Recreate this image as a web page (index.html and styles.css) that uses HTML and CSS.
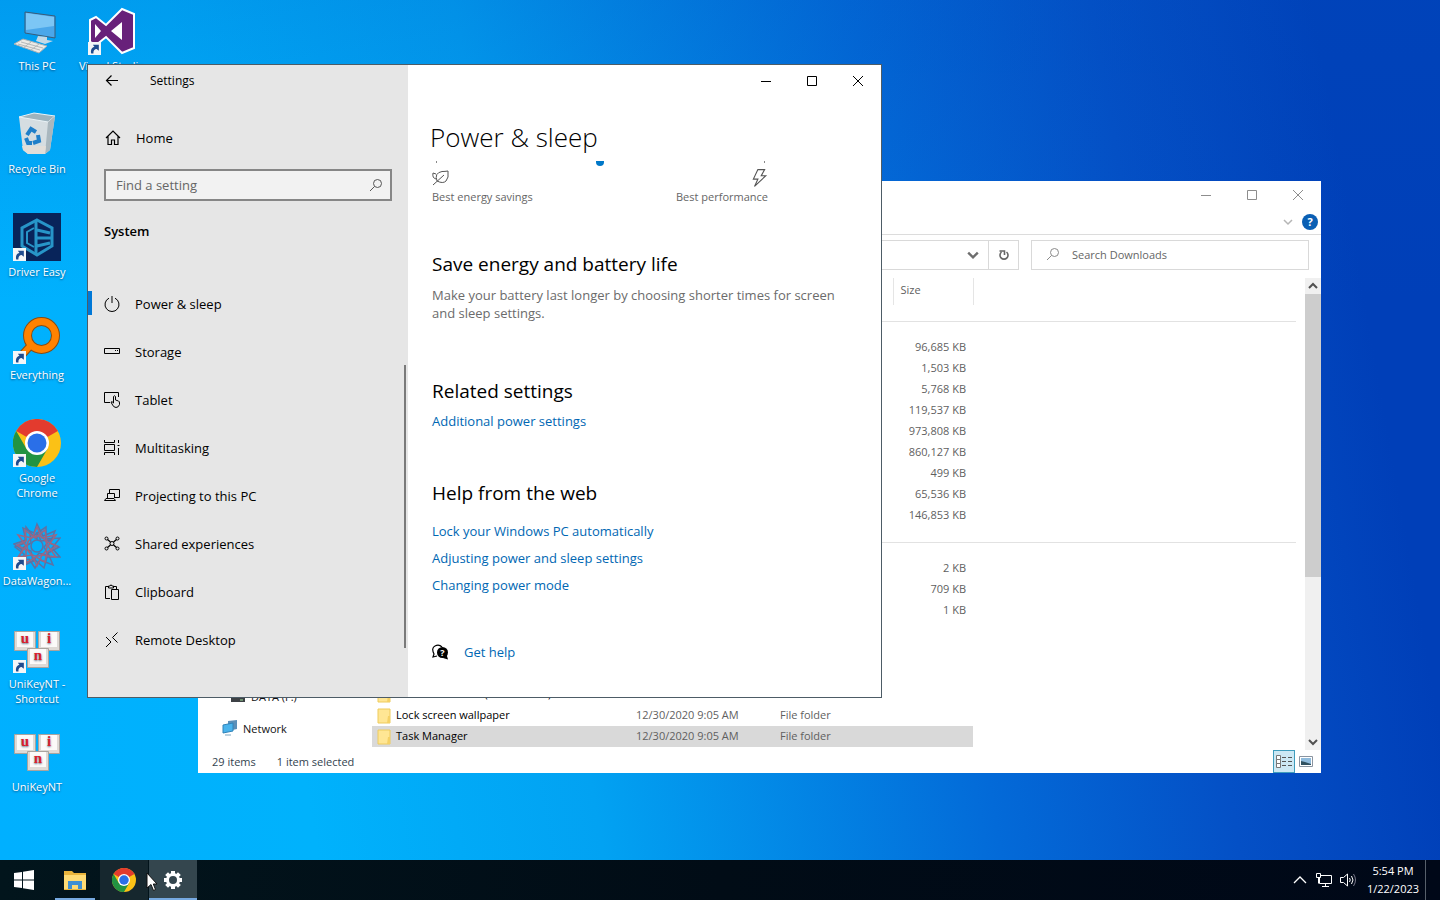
FILE: index.html
```html
<!DOCTYPE html>
<html lang="en">
<head>
    <meta charset="utf-8">
    <title>Desktop</title>
    <link rel="stylesheet" href="styles.css">
</head>
<body>
    <!-- shared shapes -->
    <svg class="defs" aria-hidden="true">
        <symbol id="chrome" viewBox="0 0 48 48">
            <circle cx="24" cy="24" r="24" fill="#fbc116"/>
            <path d="M24 24 L3.2 12 A24 24 0 0 1 44.8 12 Z" fill="#e33b2e"/>
            <path d="M24 12 H44.8 L40 8 H24 Z" fill="#e33b2e"/>
            <path d="M3.2 12 A24 24 0 0 0 24 48 L34.4 30 L24 24 L13.6 30 Z" fill="#229342"/>
            <circle cx="24" cy="24" r="12" fill="#fff"/>
            <circle cx="24" cy="24" r="9.5" fill="#2a6fe8"/>
        </symbol>
        <symbol id="shortcut" viewBox="0 0 12 12">
            <path d="M0 0h12v12H0z" fill="#f4f6f8"/>
            <path d="M3 10.5C2 7 4 4.500 6 4.500L4.500 2.500H10V8L8 6.500C6 6.500 4.800 8 5 10.500z" fill="#1f4b8e"/>
        </symbol>
        <symbol id="keys" viewBox="0 0 48 48">
            <g stroke="#a9a49f">
                <path d="M1.500 6.500h21v19h-21z" fill="#dedad6"/>
                <path d="M25.500 6.500h21v19h-21z" fill="#dedad6"/>
                <path d="M14.500 23.500h21v19h-21z" fill="#dedad6"/>
            </g>
            <path d="M4 7h16v15H4zM28 7h16v15H28zM17 24h16v15H17z" fill="#fbfaf9"/>
        </symbol>
        <symbol id="folder" viewBox="0 0 14 16">
            <path d="M1 1h12v14H1z" fill="#ffe694" stroke="#eecb5c"/>
            <path d="M10 15l1-7h2v7z" fill="#f5d165"/>
        </symbol>
        <symbol id="lens" viewBox="0 0 14 14">
            <circle cx="8.500" cy="5.500" r="4" fill="none" stroke="currentColor"/>
            <path d="M5.500 8.500L1 13" stroke="currentColor"/>
        </symbol>
        <symbol id="min" viewBox="0 0 12 12"><path d="M1 6.500h10" stroke="currentColor"/></symbol>
        <symbol id="max" viewBox="0 0 12 12"><path d="M1.500 1.500h9v9h-9z" fill="none" stroke="currentColor"/></symbol>
        <symbol id="close" viewBox="0 0 12 12"><path d="M1 1l10 10M11 1L1 11" stroke="currentColor"/></symbol>
    </svg>

    <main class="desktop">
        <div class="icons">
            <a class="shortcut" href="#">
                <svg viewBox="0 0 48 48">
                    <path d="M12 5l30 4v22l-30-5z" fill="#4aa7ea" stroke="#3a5c78"/>
                    <path d="M13 6l28 4v9L13 23z" fill="#7cc6f5"/>
                    <path d="M25 29l9 1v3l6 1-8 3-9-3z" fill="#c4d9e6"/>
                    <path d="M1 37l9-5 24 7-8 7z" fill="#eceae6" stroke="#a7b0b5"/>
                    <path d="M5 37l22 6M8 35l22 6M10 41l8-6M18 43l8-6" stroke="#b4b8ba"/>
                </svg>
                <span>This PC</span>
            </a>
            <a class="shortcut" href="#">
                <svg viewBox="0 0 48 48">
                    <path d="M6 7l36-1-5 34-5 4-17 0-5-4z" fill="#d5dde1"/>
                    <path d="M6 7l15-4 21 3-7 6z" fill="#9eb3bd" stroke="#eaf3f7"/>
                    <path d="M35 12l7-6-5 34-5 4z" fill="#a9b7be"/>
                    <path d="M9 36l1 4 5 4h17l1-8z" fill="#e2ded9"/>
                    <g fill="none" stroke="#1f7fc9" stroke-width="4">
                        <path d="M14 25l4-6 5 3"/>
                        <path d="M25 25l1 6-6 2"/>
                        <path d="M13 28l2 5h4"/>
                    </g>
                </svg>
                <span>Recycle Bin</span>
            </a>
            <a class="shortcut" href="#">
                <svg viewBox="0 0 48 48">
                    <path d="M0 0h48v48H0z" fill="#08245a"/>
                    <g fill="none" stroke="#2795c8" stroke-width="3">
                        <path d="M24 7l15 8v18l-15 9-15-9V15z"/>
                        <path d="M23 8v33M24 17l13 3M24 25h14M24 33l13-3"/>
                        <path d="M21 15l-7 4v11l7 4" stroke-width="2"/>
                    </g>
                    <use href="#shortcut" x="0" y="35" width="13" height="13"/>
                </svg>
                <span>Driver Easy</span>
            </a>
            <a class="shortcut" href="#">
                <svg viewBox="0 0 48 48">
                    <path d="M19 28L8 40" stroke="#8a4b10" stroke-width="8"/>
                    <circle cx="28.500" cy="19.500" r="14" fill="none" stroke="#8a4b10" stroke-width="9"/>
                    <path d="M19 28L8 40" stroke="#ff8200" stroke-width="6"/>
                    <circle cx="28.500" cy="19.500" r="14" fill="none" stroke="#ff8200" stroke-width="7"/>
                    <use href="#shortcut" x="0" y="35" width="13" height="13"/>
                </svg>
                <span>Everything</span>
            </a>
            <a class="shortcut" href="#">
                <svg viewBox="0 0 48 48">
                    <use href="#chrome"/>
                    <use href="#shortcut" x="0" y="35" width="13" height="13"/>
                </svg>
                <span>Google Chrome</span>
            </a>
            <a class="shortcut" href="#">
                <svg viewBox="0 0 48 48">
                    <g fill="none" stroke="#5c72a4" stroke-width="1.500">
                        <path d="M24 2l6 12 12-5-5 12 9 4-11 6 5 12-13-5-5 8-6-9-12 3 5-12-8-6 12-4-3-12 11 5z"/>
                        <path d="M13 5l7 9 13-9 0 12 14-1-8 10 8 9-13 0-3 11-9-8-12 6 1-12-9-7 10-4z"/>
                        <path d="M24 10l4 9 9-1-6 7 5 9-10-3-6 8-2-10-9-3 9-5-1-9 7 5z"/>
                        <circle cx="24" cy="24" r="6"/>
                    </g>
                    <g fill="none" stroke="#9a6684" stroke-width="1.500">
                        <path d="M5 13l14 3 5-11 5 11 14-3-8 11 8 11-14-2-5 11-5-11-14 2 8-11z"/>
                        <path d="M12 8l10 8 10-8 2 12 10 4-10 6-2 10-9-5-10 6v-13l-9-5 9-4z"/>
                        <circle cx="24" cy="24" r="10"/>
                    </g>
                    <use href="#shortcut" x="0" y="35" width="13" height="13"/>
                </svg>
                <span>DataWagon...</span>
            </a>
            <a class="shortcut" href="#">
                <svg viewBox="0 0 48 48">
                    <use href="#keys"/>
                    <g class="keycap"><text x="12" y="18">u</text><text x="36" y="18">i</text><text x="25" y="35">n</text></g>
                    <use href="#shortcut" x="0" y="35" width="13" height="13"/>
                </svg>
                <span>UniKeyNT - Shortcut</span>
            </a>
            <a class="shortcut" href="#">
                <svg viewBox="0 0 48 48">
                    <use href="#keys"/>
                    <g class="keycap"><text x="12" y="18">u</text><text x="36" y="18">i</text><text x="25" y="35">n</text></g>
                </svg>
                <span>UniKeyNT</span>
            </a>
            <a class="shortcut" href="#">
                <svg viewBox="0 0 48 48">
                    <path d="M2 13l6-3 10 8L34 2l12 5v34l-12 5-16-16-10 8-6-3z" fill="#68217a" stroke="#fff" stroke-width="2"/>
                    <path d="M7 17l6 7-6 7zM34 15v18L23 24z" fill="#fff"/>
                    <use href="#shortcut" x="0" y="35" width="13" height="13"/>
                </svg>
                <span>Visual Studio</span>
            </a>
        </div>

        <!-- file explorer, behind -->
        <section class="window explorer">
            <header class="titlebar inactive">
                <button aria-label="Minimize"><svg><use href="#min"/></svg></button>
                <button aria-label="Maximize"><svg><use href="#max"/></svg></button>
                <button aria-label="Close"><svg><use href="#close"/></svg></button>
            </header>
            <div class="ribbon">
                <svg class="caret" viewBox="0 0 10 10"><path d="M1 3l4 4 4-4" fill="none" stroke="#b5b5b5" stroke-width="1.500"/></svg>
                <button class="help" aria-label="Help">?</button>
            </div>
            <div class="address-row">
                <div class="address">
                    <button class="drop" aria-label="Previous locations"><svg viewBox="0 0 10 10"><path d="M1 3l4 4 4-4" fill="none" stroke="#6e6e6e" stroke-width="2"/></svg></button>
                    <button class="refresh" aria-label="Refresh"><svg viewBox="0 0 12 12"><path d="M8.500 3A4 4 0 1 1 3.500 3M1.500 2h5v4" fill="none" stroke="#666" stroke-width="1.600"/></svg></button>
                </div>
                <label class="search-files">
                    <svg><use href="#lens"/></svg>
                    <input type="text" placeholder="Search Downloads" aria-label="Search Downloads">
                </label>
            </div>
            <div class="explorer-body">
                <nav class="tree">
                    <a class="drive" href="#">
                        <svg viewBox="0 0 16 16"><path d="M2 8h12l1 2v4H1v-4z" fill="#3d4145"/><path d="M10 12h3" stroke="#9fe0a0"/></svg>
                        DATA (F:)
                    </a>
                    <a href="#">
                        <svg viewBox="0 0 16 16"><path d="M6 1l9-1v9l-9 2z" fill="#5b8fb8"/><path d="M1 5l10-2v8L1 13z" fill="#49b3ec" stroke="#3183b8"/><path d="M3 15h6" stroke="#7fa6bf"/></svg>
                        Network
                    </a>
                </nav>
                <div class="files">
                    <table>
                        <colgroup><col class="c-name"><col class="c-date"><col class="c-type"><col class="c-size"><col></colgroup>
                        <thead><tr><th></th><th></th><th></th><th class="size-head">Size</th><th></th></tr></thead>
                        <tbody>
                            <tr class="group"><td colspan="5"><hr></td></tr>
                            <tr><td></td><td></td><td></td><td>96,685 KB</td></tr>
                            <tr><td></td><td></td><td></td><td>1,503 KB</td></tr>
                            <tr><td></td><td></td><td></td><td>5,768 KB</td></tr>
                            <tr><td></td><td></td><td></td><td>119,537 KB</td></tr>
                            <tr><td></td><td></td><td></td><td>973,808 KB</td></tr>
                            <tr><td></td><td></td><td></td><td>860,127 KB</td></tr>
                            <tr><td></td><td></td><td></td><td>499 KB</td></tr>
                            <tr><td></td><td></td><td></td><td>65,536 KB</td></tr>
                            <tr><td></td><td></td><td></td><td>146,853 KB</td></tr>
                        </tbody>
                        <tbody>
                            <tr class="group"><td colspan="5"><hr></td></tr>
                            <tr><td></td><td></td><td></td><td>2 KB</td></tr>
                            <tr><td></td><td></td><td></td><td>709 KB</td></tr>
                            <tr><td></td><td></td><td></td><td>1 KB</td></tr>
                            <tr><td></td><td></td><td></td><td></td></tr>
                            <tr><td></td><td></td><td></td><td></td></tr>
                            <tr><td></td><td></td><td></td><td></td></tr>
                            <tr><td><svg><use href="#folder"/></svg>AutoLock Win 10 (Lock screen)</td><td>12/30/2020 9:05 AM</td><td>File folder</td><td></td></tr>
                            <tr><td><svg><use href="#folder"/></svg>Lock screen wallpaper</td><td>12/30/2020 9:05 AM</td><td>File folder</td><td></td></tr>
                            <tr class="selected"><td><svg><use href="#folder"/></svg>Task Manager</td><td>12/30/2020 9:05 AM</td><td>File folder</td><td></td></tr>
                            <tr><td><svg><use href="#folder"/></svg></td><td></td><td></td><td></td></tr>
                        </tbody>
                    </table>
                </div>
                <div class="scrollbar">
                    <svg viewBox="0 0 10 10"><path d="M1 7l4-4 4 4" fill="none" stroke="#505050" stroke-width="2"/></svg>
                    <div class="thumb"></div>
                    <svg viewBox="0 0 10 10"><path d="M1 3l4 4 4-4" fill="none" stroke="#505050" stroke-width="2"/></svg>
                </div>
            </div>
            <footer class="status">
                <span>29 items</span>
                <span>1 item selected</span>
                <button class="view on" aria-label="Details view">
                    <svg viewBox="0 0 16 14"><g fill="#fff" stroke="#777"><path d="M.5.5h4v4h-4zM.5 4.500h4v4h-4zM.5 8.500h4v4h-4z"/></g><path d="M6 2.500h4M12 2.500h4M6 6.500h4M12 6.500h4M6 10.500h4M12 10.500h4" stroke="#555"/></svg>
                </button>
                <button class="view" aria-label="Large icons view">
                    <svg viewBox="0 0 16 14"><path d="M1.500 1.500h13v10h-13z" fill="#fff" stroke="#8a94a0"/><path d="M3 3h10v7H3z" fill="#8fbbdc"/><path d="M3 10V6l4 1 6 2v1z" fill="#30505f"/></svg>
                </button>
            </footer>
        </section>

        <!-- settings, in front -->
        <section class="window settings">
            <nav class="side">
                <div class="side-title">
                    <button aria-label="Back"><svg viewBox="0 0 16 16"><path d="M14 7.500H2.500M7.500 2.500l-5 5 5 5" fill="none" stroke="#000" stroke-width="1.200"/></svg></button>
                    <span>Settings</span>
                </div>
                <a class="home" href="#">
                    <svg viewBox="0 0 16 16"><path d="M1 8l7-7 7 7M3 6.500v8h3.500V10h3v4.500H13v-8" fill="none" stroke="#000" stroke-width="1.200"/></svg>
                    Home
                </a>
                <label class="find">
                    <input type="text" placeholder="Find a setting" aria-label="Find a setting">
                    <svg><use href="#lens"/></svg>
                </label>
                <h2>System</h2>
                <div class="menu">
                    <ul>
                        <li class="current"><a href="#"><svg viewBox="0 0 16 16"><path d="M5 2.200a7 7 0 1 0 6 0M8 0v7"/></svg>Power &amp; sleep</a></li>
                        <li><a href="#"><svg viewBox="0 0 16 16"><path d="M.5 4.500h15v5H.5zM11 6.500h1M13 6.500h1"/></svg>Storage</a></li>
                        <li><a href="#"><svg viewBox="0 0 16 16"><path d="M6 10.500H.5v-10h14V5M9.500 11V4.500q1-1.500 2 0V8l3 1q1 .5 1 2v1.500q-1 3-3.500 3T8 12l-1-2q1-1 2.500 1"/></svg>Tablet</a></li>
                        <li><a href="#"><svg viewBox="0 0 16 16"><path d="M.5 0v2.500h10V0M.5 4.500h10v6H.5zM.5 15v-2.500h10V15M14.500 0v3M14.500 8v7M13.500 5.500h2"/></svg>Multitasking</a></li>
                        <li><a href="#"><svg viewBox="0 0 16 16"><path d="M5.500 5V1.500h10v8H11M3.500 10V5.500h7V10M.5 12.500h11L10 10.500H2z"/></svg>Projecting to this PC</a></li>
                        <li><a href="#"><svg viewBox="0 0 16 16"><circle cx="2.500" cy="2.500" r="1.500"/><circle cx="13.500" cy="2.500" r="1.500"/><circle cx="2.500" cy="12.500" r="1.500"/><circle cx="13.500" cy="12.500" r="1.500"/><circle cx="8" cy="7.500" r="2"/><path d="M3.500 3.500l3 2.500M12.500 3.500l-3 2.500M3.500 11.500l3-2.500M12.500 11.500l-3-2.500" stroke-width="1.300"/></svg>Shared experiences</a></li>
                        <li><a href="#"><svg viewBox="0 0 16 16"><path d="M6 14.500H1.500v-12H4M10 2.500h2.500V5M4.500 4V2H6q1-2.500 2 0h1.500v2zM7.500 5.500h7v10h-7z"/></svg>Clipboard</a></li>
                        <li><a href="#"><svg viewBox="0 0 16 16"><path d="M2 5l5 5-5 5M13.500.5L8.500 5.500l5 5"/></svg>Remote Desktop</a></li>
                    </ul>
                    <div class="menu-thumb"></div>
                </div>
            </nav>
            <div class="content">
                <header class="titlebar">
                    <button aria-label="Minimize"><svg><use href="#min"/></svg></button>
                    <button aria-label="Maximize"><svg><use href="#max"/></svg></button>
                    <button aria-label="Close"><svg><use href="#close"/></svg></button>
                </header>
                <h1>Power &amp; sleep</h1>
                <div class="page">
                    <div class="power-mode">
                        <div class="slider"><input type="range" min="0" max="2" value="1" aria-label="Power mode"></div>
                        <div class="ends">
                            <div>
                                <svg viewBox="0 0 18 16"><path d="M5 11Q2 3 10 1.500q3 0 6-.5Q17 8 14 11T5 11M1 15L12 5M4 9Q0 8 1 3l3 1" fill="none" stroke="#555"/></svg>
                                <span>Best energy savings</span>
                            </div>
                            <div>
                                <svg viewBox="0 0 16 16"><path d="M7 .5h6L10 6h4L4 15.500 7 9H3z" fill="none" stroke="#555"/></svg>
                                <span>Best performance</span>
                            </div>
                        </div>
                    </div>
                    <h3>Save energy and battery life</h3>
                    <p>Make your battery last longer by choosing shorter times for screen and sleep settings.</p>
                    <h3>Related settings</h3>
                    <a class="related" href="#">Additional power settings</a>
                    <h3>Help from the web</h3>
                    <div class="web">
                        <a href="#">Lock your Windows PC automatically</a>
                        <a href="#">Adjusting power and sleep settings</a>
                        <a href="#">Changing power mode</a>
                    </div>
                    <a class="get-help" href="#">
                        <svg viewBox="0 0 16 16"><path d="M10 3Q7 0 3 2T2 10L1 13l4-1" fill="none" stroke="#000" stroke-width="1.200"/><circle cx="10.500" cy="8.500" r="5.500"/><path d="M11 14l5 1.500-1.500-5z"/><text x="10.500" y="12">?</text></svg>
                        Get help
                    </a>
                </div>
            </div>
        </section>
    </main>

    <footer class="taskbar">
        <button class="task" aria-label="Start">
            <svg viewBox="0 0 20 20"><path d="M0 3l8-1v7.500H0zM9 1.800L20 0v9.500H9zM0 10.500h8V18l-8-1zM9 10.500h11V20L9 18.200z" fill="#fff"/></svg>
        </button>
        <button class="task open" aria-label="File Explorer">
            <svg viewBox="0 0 24 24"><path d="M1 3h8l2 2h12v17H1z" fill="#e9b43c"/><path d="M1 7h22v14H1z" fill="#fedb75"/><path d="M5 21v-8h14v8h-4v-4H9v4z" fill="#3f8fd2"/></svg>
        </button>
        <button class="task hover" aria-label="Google Chrome">
            <svg><use href="#chrome"/></svg>
        </button>
        <button class="task active" aria-label="Settings">
            <svg viewBox="0 0 24 24"><g stroke="#fff" stroke-width="4"><path d="M12 3v18M3 12h18M5.600 5.600l12.800 12.800M18.400 5.600L5.600 18.400"/></g><circle cx="12" cy="12" r="5.500" fill="#34464e" stroke="#fff" stroke-width="3"/></svg>
        </button>
        <div class="tray">
            <svg viewBox="0 0 16 16"><path d="M2 11l6-6 6 6" fill="none" stroke="#fff" stroke-width="1.300"/></svg>
            <svg viewBox="0 0 16 16"><path d="M5 3.500h10.500v8H3.500V6M9.500 12v3M6 14.500h7M.5 1.500h4v4h-4zM2.500 5.500v6" fill="none" stroke="#fff"/></svg>
            <svg viewBox="0 0 16 16"><path d="M.5 5.500h3l4-3.500v12l-4-3.500h-3zM9.500 6q1.500 2 0 4M11.500 4q3 4 0 8" fill="none" stroke="#fff"/><path d="M13.500 2q4 6 0 12" fill="none" stroke="#778"/></svg>
            <time datetime="2023-01-22T17:54">5:54 PM<br>1/22/2023</time>
            <button class="show-desktop" aria-label="Show desktop"></button>
        </div>
    </footer>

    <svg class="pointer" viewBox="0 0 12 20"><path d="M1 1v15l4-3.500 2.500 6 2-1L7.300 12H11z" fill="#fff" stroke="#111"/></svg>
</body>
</html>
```

FILE: styles.css
```css
* {
    box-sizing: border-box;
}
body {
    margin: 0;
    height: 100vh;
    display: flex;
    flex-direction: column;
    overflow: hidden;
    font: 11px/15px "Open Sans", "Noto Sans", sans-serif;
    color: #000;
}
a {
    color: inherit;
    text-decoration: none;
}
button {
    padding: 0;
    border: 0;
    background: none;
    font: inherit;
    color: inherit;
    display: flex;
    align-items: center;
    justify-content: center;
}
input {
    border: 0;
    padding: 0;
    background: none;
    font: inherit;
    min-width: 0;
}
.defs {
    position: absolute;
    width: 0;
    height: 0;
}
.keycap {
    font: bold 15px "Liberation Serif", serif;
    fill: #d9202c;
    text-anchor: middle;
}

/* desktop */
.desktop {
    flex: 1;
    position: relative;
    overflow: hidden;
    background:
        linear-gradient(to bottom, rgba(0, 80, 190, .22), rgba(0, 80, 190, 0) 35%),
        linear-gradient(80deg, #00b0ff 0%, #00b2fc 20%, #02a2f2 38%, #036ad8 63%, #0450c6 78%, #003fb8 92%);
}
.icons {
    height: 100%;
    padding-top: 7px;
    display: grid;
    grid-template-rows: repeat(8, 103px);
    grid-auto-flow: column;
    grid-auto-columns: 75px;
}
.shortcut {
    display: flex;
    flex-direction: column;
    align-items: center;
    gap: 3px;
    padding-right: 1px;
    color: #fff;
    text-align: center;
    text-shadow: 0 1px 2px rgba(0, 30, 70, .6);
}
.shortcut span {
    padding: 0 1px;
}
.shortcut svg {
    width: 48px;
    height: 48px;
}

/* windows */
.window {
    position: absolute;
    display: flex;
    background: #fff;
}
.titlebar {
    display: flex;
    justify-content: flex-end;
    height: 32px;
}
.titlebar button {
    width: 46px;
    height: 100%;
}
.titlebar svg {
    width: 12px;
    height: 12px;
}
.titlebar.inactive {
    height: 28px;
    color: #8d8d8d;
}

/* explorer */
.explorer {
    left: 198px;
    right: 119px;
    top: 181px;
    bottom: 87px;
    flex-direction: column;
    color: #5f5f5f;
}
.ribbon {
    height: 26px;
    display: flex;
    align-items: center;
    justify-content: flex-end;
    gap: 9px;
    padding-right: 3px;
    border-bottom: 1px solid #dcdcdc;
}
.ribbon .caret {
    width: 10px;
    height: 10px;
}
.help {
    width: 16px;
    height: 16px;
    border-radius: 50%;
    background: #0a5fb4;
    color: #fff;
    font-weight: bold;
}
.address-row {
    display: flex;
    gap: 12px;
    padding: 5px 12px 8px;
}
.address, .search-files {
    height: 30px;
    border: 1px solid #d9d9d9;
    display: flex;
}
.address {
    flex: 1;
    justify-content: flex-end;
}
.address button {
    width: 30px;
}
.address svg {
    width: 12px;
    height: 12px;
}
.address .refresh {
    border-left: 1px solid #d9d9d9;
}
.search-files {
    width: 278px;
    align-items: center;
    gap: 12px;
    padding: 0 14px 2px;
}
.search-files svg {
    width: 14px;
    height: 14px;
    color: #8a8a8a;
}
.search-files input {
    flex: 1;
}
.search-files input::placeholder {
    color: #666;
}
.explorer-body {
    flex: 1;
    min-height: 0;
    display: flex;
}
.tree {
    width: 174px;
    flex: none;
    padding: 0 0 10px 24px;
    display: flex;
    flex-direction: column;
    justify-content: flex-end;
    color: #111;
}
.tree a {
    display: flex;
    align-items: center;
    gap: 5px;
    height: 24px;
}
.tree .drive {
    padding-left: 8px;
    margin-bottom: 8px;
}
.tree svg {
    width: 16px;
    height: 16px;
}
.files {
    flex: 1;
    overflow: hidden;
}
.files table {
    width: 100%;
    table-layout: fixed;
    border-collapse: collapse;
}
.c-name { width: 264px; }
.c-date { width: 144px; }
.c-type { width: 113px; }
.c-size { width: 80px; }
.files th {
    height: 27px;
    padding: 0 0 4px;
    font-weight: normal;
    text-align: left;
}
.files .size-head {
    padding-left: 7px;
    border: solid #e5e5e5;
    border-width: 0 1px;
}
.files td {
    height: 21px;
    padding: 0 0 2px;
    white-space: nowrap;
}
.files td:first-child {
    padding: 0 0 0 5px;
    color: #000;
}
.files td:nth-child(4) {
    text-align: right;
    padding-right: 7px;
}
.files td svg {
    width: 14px;
    height: 16px;
    margin-right: 5px;
    vertical-align: middle;
}
.files .group td {
    height: 32px;
    padding: 0 9px 0 12px;
}
.files hr {
    margin: 0;
    border: 0;
    border-top: 1px solid #e2e2e2;
}
.files .selected td {
    background: #d9d9d9;
}
.scrollbar {
    width: 16px;
    display: flex;
    flex-direction: column;
    align-items: center;
    background: #f0f0f0;
}
.scrollbar svg {
    width: 10px;
    height: 16px;
}
.scrollbar .thumb {
    width: 100%;
    height: 60%;
    margin-bottom: auto;
    background: #cdcdcd;
}
.status {
    height: 23px;
    display: flex;
    align-items: center;
    gap: 21px;
    padding: 0 4px 0 14px;
    color: #33434f;
}
.view {
    width: 22px;
    height: 23px;
}
.view.on {
    margin-left: auto;
    margin-right: -21px;
    border: 1px solid #3f9dbd;
    background: #cce8f4;
}
.view svg {
    width: 16px;
    height: 14px;
}

/* settings */
.settings {
    left: 87px;
    right: 558px;
    top: 64px;
    bottom: 162px;
    border: 1px solid #4d5c66;
}
.side {
    width: 320px;
    flex: none;
    display: flex;
    flex-direction: column;
    background: #e6e6e6;
    font-size: 13px;
    line-height: 20px;
}
.side-title {
    display: flex;
    align-items: center;
    height: 32px;
    padding-left: 16px;
    gap: 30px;
    font-size: 12px;
}
.side svg, .get-help svg {
    width: 16px;
    height: 16px;
}
.home {
    display: flex;
    align-items: center;
    gap: 15px;
    height: 48px;
    margin-top: 17px;
    padding-left: 17px;
}
.find {
    display: flex;
    align-items: center;
    height: 32px;
    margin: 7px 16px 0;
    padding: 0 7px 0 10px;
    border: 2px solid #868686;
    background: #f2f2f2;
}
.find input {
    flex: 1;
}
.find input::placeholder {
    color: #666;
}
.side .find svg {
    width: 14px;
    height: 14px;
    color: #555;
}
.side h2 {
    margin: 20px 16px 0;
    font-size: 13px;
    line-height: 20px;
    font-weight: 600;
}
.menu {
    flex: 1;
    min-height: 0;
    display: flex;
    padding-top: 39px;
}
.menu ul {
    flex: 1;
    margin: 0;
    padding: 0;
    list-style: none;
}
.menu a {
    display: flex;
    align-items: center;
    gap: 15px;
    height: 48px;
    padding-left: 16px;
}
.menu li svg {
    fill: none;
    stroke: #000;
    stroke-width: 1;
}
.menu .current {
    background: linear-gradient(#0078d7, #0078d7) 0 11px / 4px 24px no-repeat;
}
.menu-thumb {
    width: 2px;
    margin: 85px 2px 49px 0;
    background: #7a7a7a;
}
.content {
    flex: 1;
    min-width: 0;
}
.content h1 {
    margin: 20px 22px 0;
    font-size: 26px;
    line-height: 40px;
    font-weight: 300;
}
.page {
    padding: 4px 24px 0;
    font-size: 13px;
    line-height: 18px;
}
.power-mode {
    width: 336px;
}
.slider {
    height: 5px;
    display: flex;
    align-items: flex-end;
    overflow: hidden;
    background:
        linear-gradient(#888, #888) 4px 0 / 1px 2px no-repeat,
        linear-gradient(#888, #888) 332px 0 / 1px 2px no-repeat;
}
.slider input {
    appearance: none;
    width: 100%;
    height: 24px;
    margin: 0;
}
.slider input::-webkit-slider-thumb {
    appearance: none;
    width: 8px;
    height: 24px;
    border-radius: 4px;
    background: #0078c8;
}
.ends {
    display: flex;
    justify-content: space-between;
    padding-top: 3px;
    font-size: 11px;
    line-height: 20px;
    color: #666;
}
.ends div {
    display: flex;
    flex-direction: column;
}
.ends div + div {
    align-items: flex-end;
}
.ends svg {
    width: 18px;
    height: 18px;
}
.page h3 {
    margin: 0;
    font-size: 19px;
    line-height: 28px;
    font-weight: 400;
}
.power-mode + h3 {
    margin-top: 43px;
}
.page p {
    margin: 8px 0 55px;
    color: #6b6b6b;
}
.page a {
    color: #0067b3;
}
.related {
    display: block;
    margin: 7px 0 49px;
}
.web {
    display: flex;
    flex-direction: column;
    gap: 9px;
    margin-top: 15px;
}
.get-help {
    display: flex;
    align-items: center;
    gap: 16px;
    margin-top: 49px;
}
.get-help text {
    font: bold 9px "Open Sans", sans-serif;
    fill: #fff;
    text-anchor: middle;
}

/* taskbar */
.taskbar {
    height: 40px;
    display: flex;
    background: linear-gradient(90deg, #02151c, #010c16 50%, #000818);
    color: #fff;
}
.task {
    width: 48px;
    margin-right: 1px;
}
.task svg {
    width: 24px;
    height: 24px;
}
.task:first-child {
    margin-right: 3px;
}
.task:first-child svg {
    width: 20px;
    height: 20px;
}
.task.open {
    background: linear-gradient(#76a9e0, #76a9e0) center bottom / 40px 2px no-repeat;
}
.task.hover {
    background: #16272e;
}
.task.active {
    background: linear-gradient(#76a9e0, #76a9e0) center bottom / 100% 2px no-repeat #34464e;
}
.tray {
    margin-left: auto;
    display: flex;
    align-items: center;
    gap: 8px;
}
.tray svg {
    width: 16px;
    height: 16px;
}
.tray time {
    width: 58px;
    line-height: 18px;
    text-align: center;
}
.show-desktop {
    width: 15px;
    height: 100%;
    margin-left: -5px;
    border-left: 1px solid #57606b;
}
.pointer {
    position: absolute;
    left: 146px;
    top: 872px;
    width: 12px;
    height: 20px;
}
```
